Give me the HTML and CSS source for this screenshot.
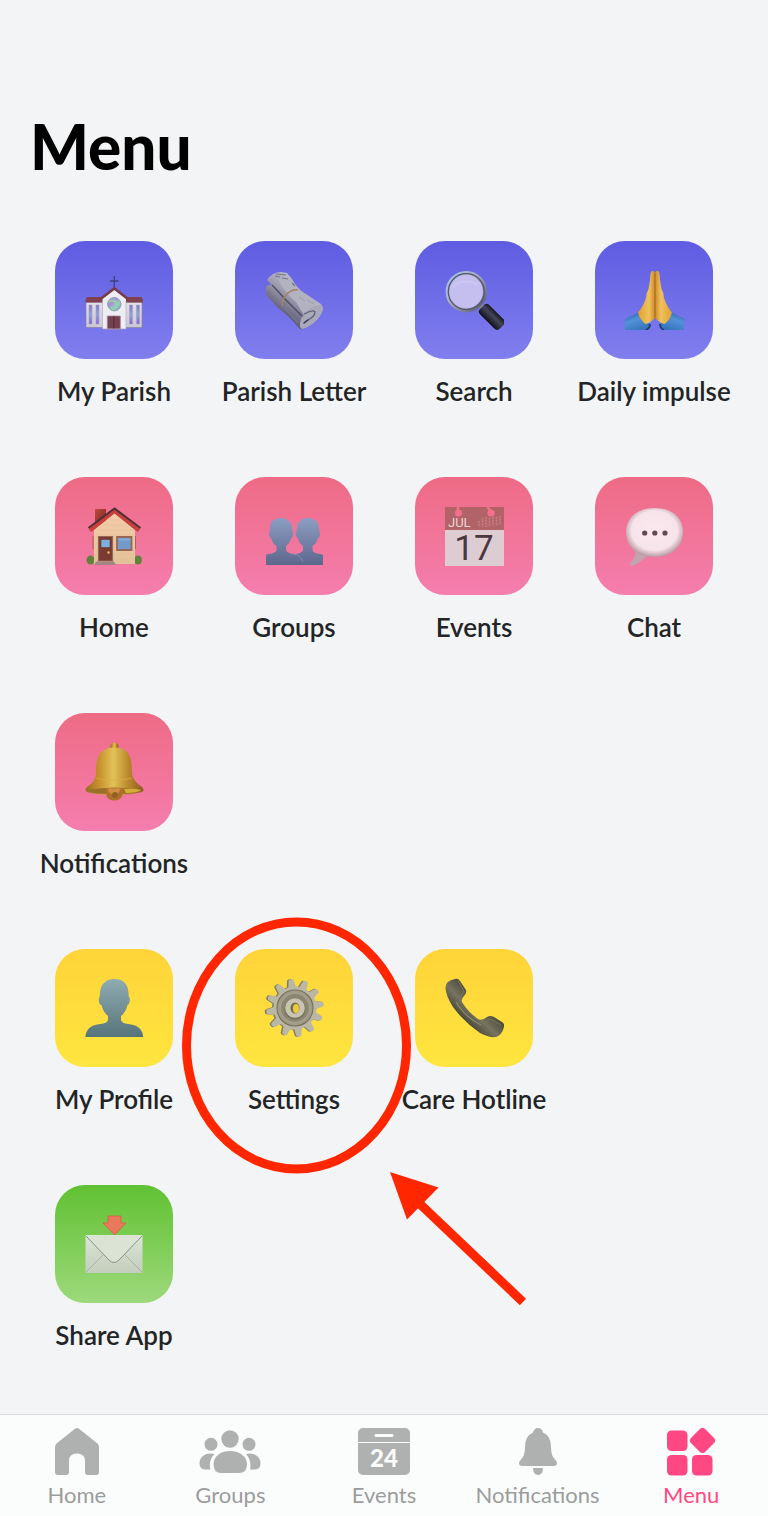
FILE: index.html
```html
<!DOCTYPE html>
<html lang="en">
<head>
  <meta charset="UTF-8" />
  <meta name="viewport" content="width=device-width, initial-scale=1.0"/>
  <title>Menu</title>
  <link rel="stylesheet" href="styles.css">
</head>
<body>
  <main class="menu-page">
    <h1 class="page-title">Menu</h1>

    <div class="menu-grid">
      <a class="menu-item" href="#parish">
        <span class="tile purple">
          <svg class="emoji" viewBox="0 0 60 60" aria-hidden="true">
            <defs>
              <linearGradient id="glass" x1="0" y1="0" x2="1" y2="1">
                <stop offset="0" stop-color="#8fb4dc"/><stop offset=".35" stop-color="#a98fdb"/>
                <stop offset=".65" stop-color="#8ed0cb"/><stop offset="1" stop-color="#8c71cf"/>
              </linearGradient>
              <linearGradient id="pane" x1="0" y1="0" x2="0" y2="1">
                <stop offset="0" stop-color="#7f78c8"/><stop offset=".5" stop-color="#8fa3dc"/><stop offset="1" stop-color="#8a62cf"/>
              </linearGradient>
              <linearGradient id="wall" x1="0" y1="0" x2="0" y2="1">
                <stop offset="0" stop-color="#e3dfe6"/><stop offset="1" stop-color="#cbc8d6"/>
              </linearGradient>
            </defs>
            <path d="M30.300 6v13M26 11h8.600" stroke="#3e4181" stroke-width="1.400"/>
            <path d="M2 32h56v25.500H2z" fill="url(#wall)" stroke="#88829e" stroke-width=".7"/>
            <path d="M3.500 27h16v5.500h-18q0-5 2-5.500zM41 27h16q2 .5 2 5.500H41z" fill="#7f414f"/>
            <path d="M18.500 27.500L30.300 19 42 27.500V59H18.500z" fill="#eeedf3"/>
            <path d="M18.500 31V59M42 31V59" stroke="#aaa7bd" stroke-width=".6"/>
            <path d="M16.500 29L30.300 18.500 44 29" fill="none" stroke="#743b4a" stroke-width="2.600"/>
            <circle cx="30.300" cy="34.200" r="6.700" fill="url(#glass)" stroke="#8fa5b5" stroke-width="1"/>
            <path d="M25 32q5-3 7 2t-5 4M29 30l5 3-1 5" fill="none" stroke="#9ad29f" stroke-width="1.500"/>
            <g fill="url(#pane)" stroke="#a5a1c4" stroke-width=".6">
              <path d="M5 35h3v19H5zM12 35h3v19h-3zM45.500 35h3v19h-3zM52.500 35h3v19h-3z"/>
            </g>
            <path d="M23.300 46h13v13h-13z" fill="#75404e" stroke="#a3889a" stroke-width=".8"/>
            <path d="M29.800 46v13" stroke="#492534" stroke-width=".8"/>
            <path d="M19 59h23" stroke="#a7a1b7" stroke-width=".7"/>
          </svg>
        </span>
        <span class="menu-label">My Parish</span>
      </a>
      <a class="menu-item" href="#letter">
        <span class="tile purple">
          <svg class="emoji" viewBox="0 0 60 60" aria-hidden="true">
            <defs>
              <linearGradient id="paper" x1=".7" y1=".2" x2=".3" y2=".75">
                <stop offset="0" stop-color="#c0bfce"/><stop offset=".5" stop-color="#9c9bad"/><stop offset="1" stop-color="#5d5c76"/>
              </linearGradient>
            </defs>
            <path d="M2 17Q4 14 8 15L3 10Q8 2 17 2L23 3Q28 8 31 14Q36 21 42 24L57 34Q60 37 58 42Q51 55 39 59Q36 60 34 57Q25 46 14 38L3 26Q1 23 2 17z" fill="url(#paper)"/>
            <path d="M8 15Q14 21 20 28L38 46" fill="none" stroke="#4f4e68" stroke-width="1.500"/>
            <path d="M4 22L18 35L34 53" fill="none" stroke="#77768d" stroke-width="1.500"/>
            <path d="M14 9Q20 22 32 32L40 45Q46 36 57 35L41 24Q32 18 26 8z" fill="#b3b2c1"/>
            <path d="M37 49Q45 37 57 35Q61 38 56 46Q50 55 39 59Q34 59 37 49z" fill="#aaa9ba"/>
            <path d="M40 44Q50 39 51 42Q51 47 42 51" fill="none" stroke="#5d5c74" stroke-width="1.200"/>
            <path d="M39 53q5-5 6-3l-5 4z" fill="#3b3a50"/>
            <path d="M12 4l10 1M11 6l5 1M18 8l6 1M28 13l3 3" stroke="#77768a" stroke-width="1.100"/>
            <path d="M35 27l6 4M43 30l7 4" stroke="#9c9bac" stroke-width="1"/>
            <path d="M18 36Q18 28 24 23Q29 19 34 20" fill="none" stroke="#a38363" stroke-width="1.600"/>
          </svg>
        </span>
        <span class="menu-label">Parish Letter</span>
      </a>
      <a class="menu-item" href="#search">
        <span class="tile purple">
          <svg class="emoji" viewBox="0 0 60 60" aria-hidden="true">
            <defs>
              <linearGradient id="rim" x1="0" y1="0" x2="1" y2="1">
                <stop offset="0" stop-color="#9ec3ea"/><stop offset=".4" stop-color="#adb0c8"/><stop offset="1" stop-color="#53536d"/>
              </linearGradient>
              <linearGradient id="handle" x1="0" y1="0" x2="0" y2="1">
                <stop offset="0" stop-color="#171722"/><stop offset=".4" stop-color="#45455a"/><stop offset="1" stop-color="#10101a"/>
              </linearGradient>
            </defs>
            <path d="M35 34l5 5" stroke="#9292b4" stroke-width="5"/>
            <rect x="34" y="40" width="28" height="13" rx="4" fill="url(#handle)" transform="rotate(45 47.500 46.500)"/>
            <circle cx="22.300" cy="21.700" r="18.700" fill="#c5bff0" stroke="url(#rim)" stroke-width="4"/>
            <circle cx="22.300" cy="21.700" r="18" fill="none" stroke="#56566e" stroke-width="1.200"/>
            <path d="M9 17Q17 8 34 14" fill="none" stroke="#ccc6f2" stroke-width="2"/>
          </svg>
        </span>
        <span class="menu-label">Search</span>
      </a>
      <a class="menu-item" href="#impulse">
        <span class="tile purple">
          <svg class="emoji" viewBox="0 0 60 60" aria-hidden="true">
            <defs>
              <linearGradient id="hand" x1="0" y1="0" x2="1" y2="0">
                <stop offset="0" stop-color="#e3a02c"/><stop offset=".65" stop-color="#eec35d"/><stop offset="1" stop-color="#d0892a"/>
              </linearGradient>
              <linearGradient id="sleeve" x1="0" y1="0" x2=".5" y2="1">
                <stop offset="0" stop-color="#25599f"/><stop offset=".5" stop-color="#5292d9"/><stop offset="1" stop-color="#3977bd"/>
              </linearGradient>
              <g id="arm">
                <path d="M1 49Q8 46 15 42L26 54L22 60H1z" fill="url(#sleeve)"/>
                <path d="M22 60Q26 58 26 54" stroke="#203f79" stroke-width="2" fill="none"/>
                <path d="M31 3Q30.500 .5 28 1Q26.500 1 26 10L24.500 19Q22 23 22 28Q19 37 14 42.500Q16 50 21.500 54Q26 53 31 48z" fill="url(#hand)"/>
              </g>
            </defs>
            <use href="#arm"/>
            <use href="#arm" transform="translate(62 0) scale(-1 1)"/>
            <path d="M31 3v45" stroke="#a36528" stroke-width="1"/>
          </svg>
        </span>
        <span class="menu-label">Daily impulse</span>
      </a>
    </div>

    <div class="menu-grid">
      <a class="menu-item" href="#home">
        <span class="tile pink">
          <svg class="emoji" viewBox="0 0 60 60" aria-hidden="true">
            <defs>
              <linearGradient id="brick" x1="0" y1="0" x2="1" y2="1">
                <stop offset="0" stop-color="#c34a43"/><stop offset="1" stop-color="#762720"/>
              </linearGradient>
              <linearGradient id="siding" x1="0" y1="0" x2="0" y2="1">
                <stop offset="0" stop-color="#f4cda8"/><stop offset="1" stop-color="#e3c198"/>
              </linearGradient>
            </defs>
            <path d="M11 3h11v15H11z" fill="url(#brick)"/>
            <ellipse cx="6.500" cy="54" rx="4" ry="4.500" fill="#63813d"/>
            <ellipse cx="54" cy="54" rx="4" ry="4.500" fill="#63813d"/>
            <path d="M9 30v13M51.500 30v13" stroke="#a3655c" stroke-width="1"/>
            <path d="M30.500 7L51 24V58H10V24z" fill="url(#siding)"/>
            <path d="M26 14h10M20 19h22M14 24h34M11 29h39M11 48h3M30 48h20M30 53h20" stroke="#e0bb95" stroke-width=".5"/>
            <path d="M6 24.500L30.500 5 55 24.500" fill="none" stroke="#c7403d" stroke-width="4"/>
            <path d="M4.500 22L30.500 2.500 56.500 22" fill="none" stroke="#4d2f32" stroke-width="2"/>
            <path d="M14.500 30.500h14V55h-14z" fill="#793b30" stroke="#966755" stroke-width="1.200"/>
            <path d="M17 33.500h9v8h-9z" fill="#81afdd" stroke="#5d3940" stroke-width=".6"/>
            <path d="M33 31h14.500v13H33z" fill="#739acb" stroke="#956855" stroke-width="1.800"/>
            <path d="M34.500 32.500h11.500v2H34.500z" fill="#83a9d6"/>
            <circle cx="24.500" cy="46.500" r="1.300" fill="#efb35f"/>
            <path d="M12 55.500h18l2 3.500H10z" fill="#a48586"/>
          </svg>
        </span>
        <span class="menu-label">Home</span>
      </a>
      <a class="menu-item" href="#groups">
        <span class="tile pink">
          <svg class="emoji" viewBox="0 0 60 60" aria-hidden="true">
            <defs>
              <linearGradient id="people" x1="0" y1="0" x2="0" y2="1">
                <stop offset="0" stop-color="#8d9dc2"/><stop offset="1" stop-color="#5d678d"/>
              </linearGradient>
              <path id="bust" fill="url(#people)" d="M17 12C25 12 28.500 17 28.300 25Q30 26 29 29Q28.500 32 27.500 32Q26 37 22 40V44Q23 47 29 48Q36 49 38 59H2V49Q3 48 5 48Q12 47 12.500 44V40Q8 37 7 32Q5.500 32 5 29Q4.500 26 5.700 25C5.500 17 9 12 17 12z"/>
            </defs>
            <use href="#bust" transform="translate(61 0) scale(-1 1)"/>
            <use href="#bust"/>
            <path d="M29 48Q37 49 39 56" fill="none" stroke="#8590b4" stroke-width=".8"/>
          </svg>
        </span>
        <span class="menu-label">Groups</span>
      </a>
      <a class="menu-item" href="#events">
        <span class="tile pink">
          <svg class="emoji" viewBox="0 0 60 60" aria-hidden="true">
            <path d="M1 1h59v59H1z" fill="#deccd3"/>
            <path d="M1 1h59v23H1z" fill="#b26367"/>
            <path d="M14 0v6M43 0l4 6" stroke="#f0708e" stroke-width="2.500"/>
            <circle cx="14.500" cy="7" r="3.600" fill="#f0708e"/>
            <circle cx="47" cy="7" r="3.600" fill="#f0708e"/>
            <path d="M35 15v6M38.500 12v9M42 11v10M45.500 12v9M49 11v9M52.500 11v9M56 10v9" stroke="#c98389" stroke-width="1.500" stroke-dasharray="1 .5"/>
            <text class="cal-month" x="4" y="21">JUL</text>
            <text class="cal-day" x="30" y="54">17</text>
          </svg>
        </span>
        <span class="menu-label">Events</span>
      </a>
      <a class="menu-item" href="#chat">
        <span class="tile pink">
          <svg class="emoji" viewBox="0 0 60 60" aria-hidden="true">
            <defs>
              <radialGradient id="bubble" cx=".5" cy=".46" r=".56">
                <stop offset="0" stop-color="#fbe8ef"/><stop offset=".72" stop-color="#f7e3ea"/><stop offset="1" stop-color="#b08f9b"/>
              </radialGradient>
            </defs>
            <path d="M11 43Q13 50 6 57Q5 60 9 59.500Q20 55 24 48z" fill="#c1a4af"/>
            <path d="M30.500 2C50 2 59 13 59 26S50 51 30.500 51 2 39 2 26 12 2 30.500 2z" fill="url(#bubble)"/>
            <g fill="#63484f"><circle cx="20.700" cy="27" r="2.600"/><circle cx="30.800" cy="27" r="2.600"/><circle cx="41" cy="27" r="2.600"/></g>
          </svg>
        </span>
        <span class="menu-label">Chat</span>
      </a>
      <a class="menu-item" href="#notifications">
        <span class="tile pink">
          <svg class="emoji" viewBox="0 0 60 60" aria-hidden="true">
            <defs>
              <linearGradient id="brass" x1="0" y1="0" x2="1" y2="0">
                <stop offset="0" stop-color="#9d6b22"/><stop offset=".25" stop-color="#c9942f"/><stop offset=".48" stop-color="#e2c257"/>
                <stop offset=".75" stop-color="#b8862a"/><stop offset="1" stop-color="#8c5a24"/>
              </linearGradient>
            </defs>
            <rect x="26.500" y="1" width="8" height="9" rx="3" fill="url(#brass)"/>
            <path d="M30.300 5.500Q43 5.500 46 15Q48 20 48 32Q49 39 58 45Q61 48 58 50Q48 53 30 53T3 50Q0 48 3 45Q12 39 12 32Q12 20 14 15Q18 5.500 30.300 5.500z" fill="url(#brass)"/>
            <path d="M12 36Q30 41 48 36" fill="none" stroke="#dcab4a" stroke-opacity=".6" stroke-width="1.200"/>
            <path d="M3 48Q30 43 58 48Q55 52 30 52T3 48z" fill="#98702a"/>
            <path d="M40 47q9-1 17 1-4 3-15 3z" fill="#d5ae35"/>
            <path d="M22 46H39Q40 58.500 30.300 58.500T22 46z" fill="#ad7129"/>
            <path d="M24 46.500h13l-3 5-5 1.500q-5-2-5-6.500z" fill="#d28d42"/>
            <circle cx="31" cy="53" r="3" fill="#956026"/>
          </svg>
        </span>
        <span class="menu-label">Notifications</span>
      </a>
    </div>

    <div class="menu-grid">
      <a class="menu-item" href="#profile">
        <span class="tile yellow">
          <svg class="emoji" viewBox="0 0 60 60" aria-hidden="true">
            <defs>
              <linearGradient id="person" x1="0" y1="0" x2="0" y2="1">
                <stop offset="0" stop-color="#8facb1"/><stop offset="1" stop-color="#57747b"/>
              </linearGradient>
            </defs>
            <path fill="url(#person)" d="M30.300 1C40 1 45 7 44.700 18.500Q46.500 20 45.500 24Q45 27 43.500 27Q42 34 37 38V42Q38 45.500 44 46Q58 47 59.300 59H1.300Q2.500 47 16.500 46Q23 45.500 24 42V38Q19 34 17.500 27Q15.500 27 15 23.500Q14.500 20 15.800 18.500C15.500 7 21 1 30.300 1z"/>
          </svg>
        </span>
        <span class="menu-label">My Profile</span>
      </a>
      <a class="menu-item" href="#settings">
        <span class="tile yellow">
          <svg class="emoji" viewBox="0 0 60 60" aria-hidden="true">
            <defs>
              <g id="cog">
                <g id="teeth">
                  <path id="tooth" d="M-4 -20L-2.500 -28Q-2 -29 0 -29T2.500 -28L4 -20V20L2.500 28Q2 29 0 29T-2.500 28L-4 20z"/>
                  <use href="#tooth" transform="rotate(30)"/>
                  <use href="#tooth" transform="rotate(60)"/>
                </g>
                <use href="#teeth" transform="rotate(90)"/>
                <circle r="21.500"/>
              </g>
            </defs>
            <use href="#cog" transform="translate(29.500 30) rotate(-8)" fill="#817b5f"/>
            <use href="#cog" transform="translate(31 30) rotate(-8)" fill="#bbb7a5"/>
            <circle cx="31" cy="30" r="18" fill="#a19c88" stroke="#77725d" stroke-width="1.200"/>
            <circle cx="31" cy="30" r="14.500" fill="#8b8671" stroke="#a6a18b" stroke-width="1.200"/>
            <circle cx="31" cy="31" r="10.500" fill="#77705a"/>
            <circle cx="31" cy="30" r="9.800" fill="#c8c4b4"/>
            <ellipse cx="31" cy="30" rx="4.500" ry="5.500" fill="#777044"/>
            <ellipse cx="32" cy="30.500" rx="3" ry="4.500" fill="#edc93b"/>
          </svg>
        </span>
        <span class="menu-label">Settings</span>
        <svg class="highlight" viewBox="0 0 344 390" aria-hidden="true">
          <ellipse cx="114.500" cy="128.500" rx="110" ry="123.500" fill="none" stroke="#ff2600" stroke-width="9"/>
          <path d="M238 287L341 385" stroke="#ff2600" stroke-width="9"/>
          <path d="M208 255L256.500 270.500 225 302.500z" fill="#ff2600"/>
        </svg>
      </a>
      <a class="menu-item" href="#hotline">
        <span class="tile yellow">
          <svg class="emoji" viewBox="0 0 60 60" aria-hidden="true">
            <defs>
              <linearGradient id="phone" x1=".3" y1=".7" x2=".6" y2=".4">
                <stop offset="0" stop-color="#494737"/><stop offset=".5" stop-color="#777460"/><stop offset="1" stop-color="#4d4e3c"/>
              </linearGradient>
            </defs>
            <path fill="url(#phone)" d="M1.500 10Q1 3 11 1Q14 0 16 3L22 12Q23 15 20 18Q17 21 18 24Q24 34 34 41Q38 43 43 39Q46 37 50 39L58 44Q61 46 60 49Q58 57 52 59Q45 60 36 55Q20 44 9 29Q2 18 1.500 10z"/>
            <path d="M12 24Q21 39 37 47" fill="none" stroke="#8d8b76" stroke-width="1.200"/>
            <path d="M14 3L20 13 17 18M41 44L46 41 57 47" fill="none" stroke="#777662" stroke-width="1"/>
          </svg>
        </span>
        <span class="menu-label">Care Hotline</span>
      </a>
    </div>

    <div class="menu-grid">
      <a class="menu-item" href="#share">
        <span class="tile green">
          <svg class="emoji" viewBox="0 0 60 60" aria-hidden="true">
            <defs>
              <linearGradient id="envelope" x1="0" y1="0" x2="0" y2="1">
                <stop offset="0" stop-color="#dce5d6"/><stop offset="1" stop-color="#c4cebd"/>
              </linearGradient>
            </defs>
            <path d="M24 2h13v7h5L30.500 21 19 9h5z" fill="#e9785c" stroke="#d9573e" stroke-width=".7"/>
            <rect x="1.500" y="21" width="57" height="38" rx="1" fill="url(#envelope)"/>
            <path d="M2 58L19 41M58 58L41 41" stroke="#a0ab9e" stroke-width=".8"/>
            <path d="M2 22L25 46Q30 51 35 46L58 22" fill="#dae3d4" stroke="#82928a" stroke-width="1"/>
          </svg>
        </span>
        <span class="menu-label">Share App</span>
      </a>
    </div>
  </main>

  <nav class="tab-bar">
    <a class="tab" href="#home">
      <svg class="tab-icon" viewBox="0 0 64 48" aria-hidden="true">
        <path d="M30 .8Q32-.8 34 .8L52.500 15.500Q54 17 54 19V44Q54 47 51 47H43Q40 47 40 44V33Q40 25.500 32 25.500T24 33V44Q24 47 21 47H13Q10 47 10 44V19Q10 17 11.500 15.500z"/>
      </svg>
      <span>Home</span>
    </a>
    <a class="tab" href="#groups">
      <svg class="tab-icon" viewBox="0 0 64 48" aria-hidden="true">
        <circle cx="32" cy="11" r="8.700"/><circle cx="13" cy="16.300" r="6.500"/><circle cx="51" cy="16.300" r="6.500"/>
        <path d="M32 23C42 23 49 29 49 36Q49 45 41 45H23Q15.500 45 15.500 36C15.500 29 22 23 32 23z"/>
        <path d="M16.500 26Q9 24.500 5 28Q1.500 31 1.500 35Q1.500 41.500 7 41.500H12.500Q10 33 16.500 26zM48 26Q55 24.500 59 28Q62.500 31 62.500 35Q62.500 41.500 57 41.500H52Q54 33 48 26z"/>
      </svg>
      <span>Groups</span>
    </a>
    <a class="tab" href="#events">
      <svg class="tab-icon" viewBox="0 0 64 48" aria-hidden="true">
        <rect x="6" y="0" width="52" height="47" rx="5"/>
        <path d="M6 14.500h52" stroke="#fbfdfc"/>
        <path d="M24 7.500h16" stroke="#fbfdfc" stroke-width="3" stroke-linecap="round"/>
        <text class="tab-date" x="32" y="39">24</text>
      </svg>
      <span>Events</span>
    </a>
    <a class="tab" href="#notifications">
      <svg class="tab-icon" viewBox="0 0 64 48" aria-hidden="true">
        <path d="M32 0Q36 0 37 4.500Q45 8 45 19Q45 28 49 31.500Q51 33.500 51 35Q51 38 48 38H16Q13 38 13 35Q13 33.500 15 31.500Q19 28 19 19Q19 8 27 4.500Q28 0 32 0z"/>
        <path d="M27 40H37Q37 47 32 47T27 40z"/>
      </svg>
      <span>Notifications</span>
    </a>
    <a class="tab active" href="#menu">
      <svg class="tab-icon" viewBox="0 0 64 48" aria-hidden="true">
        <rect x="8" y="2.500" width="20.500" height="20.500" rx="4.500"/>
        <rect x="8" y="27" width="20.500" height="20.500" rx="4.500"/>
        <rect x="33" y="27" width="20.500" height="20.500" rx="4.500"/>
        <rect x="33.500" y="2.500" width="20" height="20" rx="4" transform="rotate(45 43.500 12.500)"/>
      </svg>
      <span>Menu</span>
    </a>
  </nav>
</body>
</html>
```

FILE: styles.css
```css
* {
  box-sizing: border-box;
}
body {
  font-family: Lato, "Open Sans", sans-serif;
  margin: 0;
  min-height: 100vh;
  display: flex;
  flex-direction: column;
  color: #222425;
  background-color: #f3f4f6;
}
a {
  color: inherit;
  text-decoration: none;
}
.menu-page {
  flex: 1;
  display: flex;
  flex-direction: column;
  gap: 68px;
  padding: 111px 24px 40px;
}
.page-title {
  margin: 0 6px -8px;
  font-size: 62px;
  line-height: 70px;
  font-weight: 900;
  color: #000;
}
.menu-grid {
  display: grid;
  grid-template-columns: repeat(4, 1fr);
  row-gap: 68px;
}
.menu-item {
  position: relative;
  display: flex;
  flex-direction: column;
  align-items: center;
  gap: 14px;
}
.tile {
  display: flex;
  align-items: center;
  justify-content: center;
  width: 118px;
  height: 118px;
  border-radius: 30px;
}
.purple {
  background: linear-gradient(#5f5ce2, #817fee);
}
.pink {
  background: linear-gradient(#ee6b85, #f57eae);
}
.yellow {
  background: linear-gradient(#fed439, #fee53f);
}
.green {
  background: linear-gradient(#60c132, #9dd97b);
}
.emoji {
  width: 60px;
  height: 60px;
}
.menu-label {
  font-size: 26px;
  line-height: 36px;
  font-weight: 600;
  white-space: nowrap;
}
.cal-month {
  font: 13px Roboto, sans-serif;
  fill: #eed5d9;
}
.cal-day {
  font: 35px Roboto, sans-serif;
  fill: #4b383f;
  text-anchor: middle;
}

/* red ring and arrow drawn over the settings entry */
.highlight {
  position: absolute;
  top: -32px;
  left: calc(50% - 112px);
  width: 344px;
  height: 390px;
  z-index: 1;
  pointer-events: none;
}
.tab-bar {
  display: grid;
  grid-template-columns: repeat(5, 1fr);
  height: 102px;
  padding-top: 13px;
  border-top: 1px solid #d8dada;
  background-color: #fbfdfc;
}
.tab {
  display: flex;
  flex-direction: column;
  align-items: center;
  gap: 4px;
  font-size: 22px;
  line-height: 30px;
  color: #9b9c9c;
}
.tab-icon {
  width: 64px;
  height: 48px;
  fill: #afb1b0;
}
.tab-date {
  font-size: 24px;
  font-weight: 900;
  text-anchor: middle;
  fill: #fbfdfc;
}
.tab.active {
  color: #ff4783;
}
.active .tab-icon {
  fill: #ff4783;
}
```
